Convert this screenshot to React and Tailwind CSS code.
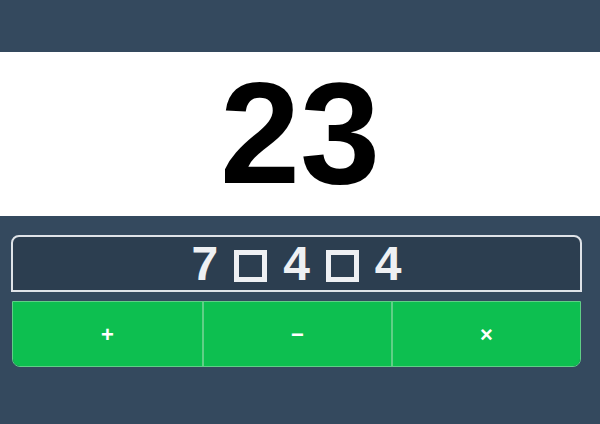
export default function App() {
  const ops = ['+', '−', '×'];
  const slot = <span className="inline-block w-[33px] h-[32px] border-[5px] border-[#eef0f3] mt-[5px]" />;

  return (
    <div className="w-full h-[424px] bg-[#34495e] pt-[52px] font-['Liberation_Sans',Arial,sans-serif]">
      {/* target number */}
      <div className="h-[164px] bg-white flex items-center justify-center">
        <span className="text-[144px] leading-none font-bold text-black">23</span>
      </div>

      {/* expression */}
      <div className="mt-[19px] ml-[11px] w-[571px] h-[57px] bg-[#2c3e50] border-2 border-[#dfe3e8] rounded-t-lg flex items-center justify-center">
        <div className="flex items-center gap-[16px] text-5xl leading-none font-bold text-[#eef0f3]">
          <span>7</span>
          {slot}
          <span>4</span>
          {slot}
          <span>4</span>
        </div>
      </div>

      {/* operator buttons */}
      <div className="mt-[9px] ml-[12px] w-[569px] h-[66px] grid grid-cols-3 rounded-b-lg overflow-hidden border border-[#5fcf86]">
        {ops.map((op, i) => (
          <button
            key={op}
            className={`bg-[#0dbf50] text-white font-bold text-[22px] flex items-center justify-center ${
              i > 0 ? 'border-l-2 border-[#5fcf86]' : ''
            }`}
          >
            {op}
          </button>
        ))}
      </div>
    </div>
  );
}
